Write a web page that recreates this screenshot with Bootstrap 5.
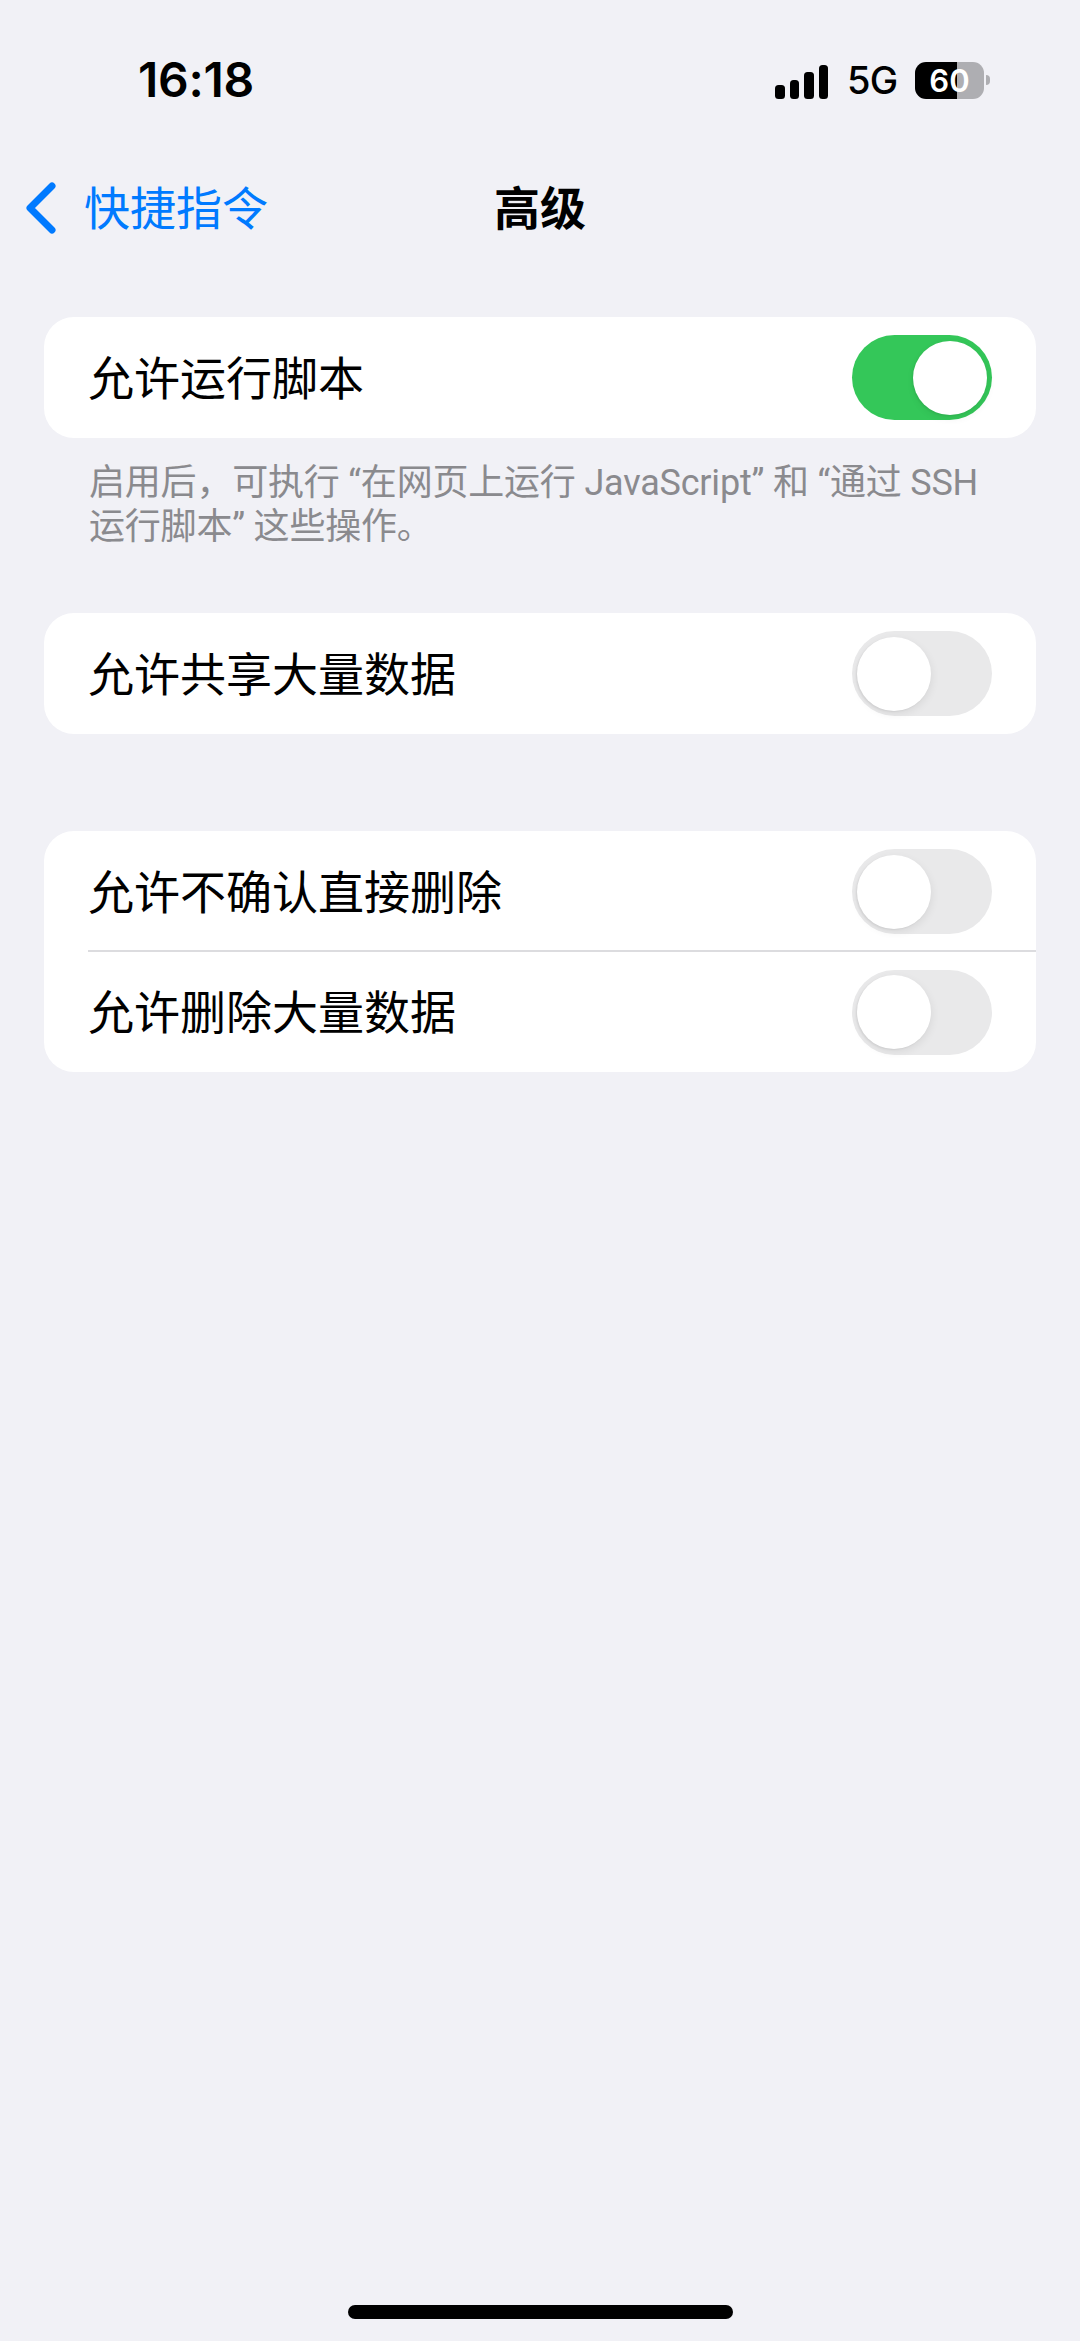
<!DOCTYPE html>
<html lang="zh-Hans">
<head>
<meta charset="utf-8">
<title>高级</title>
<link href="https://cdn.jsdelivr.net/npm/bootstrap@5.3.0/dist/css/bootstrap.min.css" rel="stylesheet">
<style>
html,body{margin:0;height:2341px;overflow:hidden}
body{background:#f1f1f6;color:#000;font-family:Inter,"Noto Sans CJK SC",sans-serif}
.phone{height:2341px}
.sb{height:160px;padding:61px 0 0 138px}
.sb-time{font-size:48px;font-weight:600;line-height:38px;height:38px;letter-spacing:-.3px}
.sb-right{margin-left:auto;padding-right:90px;height:38px}
.sig{width:54px;height:35px;margin-right:18px;margin-top:2px}
.sig span{display:block;width:9.5px;background:#000;border-radius:3.5px;margin-right:5px}
.sig span:last-child{margin-right:0}
.s1{height:14px}.s2{height:19px}.s3{height:27px}.s4{height:34px}
.net{font-size:38px;font-weight:500;line-height:38px;width:48px;margin-right:20px;letter-spacing:-.7px}
.batt{width:69px;height:37px;border-radius:11px;background:linear-gradient(90deg,#000 0 42px,#aeaeb2 42px);color:#fff;font-size:31px;font-weight:600;line-height:37px;text-align:center}
.nub{width:4px;height:10px;background:#aeaeb2;border-radius:0 4px 4px 0;margin-left:2px}
.navline{height:96px}
.navside{flex:1 1 0;padding-left:25px}
.chev{width:32px;height:52px;margin-right:27px}
.navback{color:#007aff;font-size:46px;line-height:60px}
.navtitle{font-size:46px;font-weight:600;line-height:60px}
.grp{margin:61px 44px 0 44px;background:#fff;border-radius:30px;overflow:hidden}
.grp.g2{margin-top:0}
.grp.g3{margin-top:97px}
.rowline{height:121px;padding-left:44px;padding-right:44px;position:relative}
.rowline.rlast{height:120px}
.rowline.rsep::after{content:"";position:absolute;left:44px;right:0;bottom:0;height:2px;background:#dcdcdf}
.rowtext{font-size:46px;line-height:60px}
.sw{width:140px;height:85px;border-radius:43px;padding:5.5px 5px;flex:none}
.sw.on{background:#34c759;justify-content:flex-end}
.sw.off{background:#e9e9ea}
.knob{width:74px;height:74px;border-radius:50%;background:#fff;box-shadow:1px 3px 9px rgba(0,0,0,.07),-1px 1px 2px rgba(0,0,0,.07)}
.foot{margin:23px 0 62px 89px;height:90px;font-family:Roboto,"Noto Sans CJK SC",sans-serif;font-size:36px;line-height:44px;color:#8a8a8e;white-space:nowrap;letter-spacing:-.2px}
.homebar{width:385px;height:14px;border-radius:7px;background:#000;margin:0 auto 22px}
</style>
</head>
<body>
<div class="phone d-flex flex-column">
  <div class="sb d-flex align-items-start">
    <div class="sb-time">16:18</div>
    <div class="sb-right d-flex align-items-center">
      <div class="sig d-flex align-items-end"><span class="s1"></span><span class="s2"></span><span class="s3"></span><span class="s4"></span></div>
      <div class="net">5G</div>
      <div class="batt">60</div>
      <div class="nub"></div>
    </div>
  </div>
  <div class="navline d-flex align-items-center">
    <div class="navside d-flex align-items-center">
      <svg class="chev" viewBox="0 0 32 52" fill="none"><path d="M27 4 L5 26 L27 48" stroke="#007aff" stroke-width="7" stroke-linecap="round" stroke-linejoin="round"/></svg>
      <span class="navback">快捷指令</span>
    </div>
    <div class="navtitle">高级</div>
    <div class="navside"></div>
  </div>
  <div class="grp">
    <div class="rowline d-flex align-items-center justify-content-between">
      <span class="rowtext">允许运行脚本</span>
      <div class="sw on d-flex"><div class="knob"></div></div>
    </div>
  </div>
  <div class="foot">启用后，可执行 “在网页上运行 JavaScript” 和 “通过 SSH<br>运行脚本” 这些操作。</div>
  <div class="grp g2">
    <div class="rowline d-flex align-items-center justify-content-between">
      <span class="rowtext">允许共享大量数据</span>
      <div class="sw off d-flex"><div class="knob"></div></div>
    </div>
  </div>
  <div class="grp g3">
    <div class="rowline rsep d-flex align-items-center justify-content-between">
      <span class="rowtext">允许不确认直接删除</span>
      <div class="sw off d-flex"><div class="knob"></div></div>
    </div>
    <div class="rowline rlast d-flex align-items-center justify-content-between">
      <span class="rowtext">允许删除大量数据</span>
      <div class="sw off d-flex"><div class="knob"></div></div>
    </div>
  </div>
  <div class="homebar mt-auto"></div>
</div>
<script src="https://cdn.jsdelivr.net/npm/bootstrap@5.3.0/dist/js/bootstrap.bundle.min.js"></script>
</body>
</html>
